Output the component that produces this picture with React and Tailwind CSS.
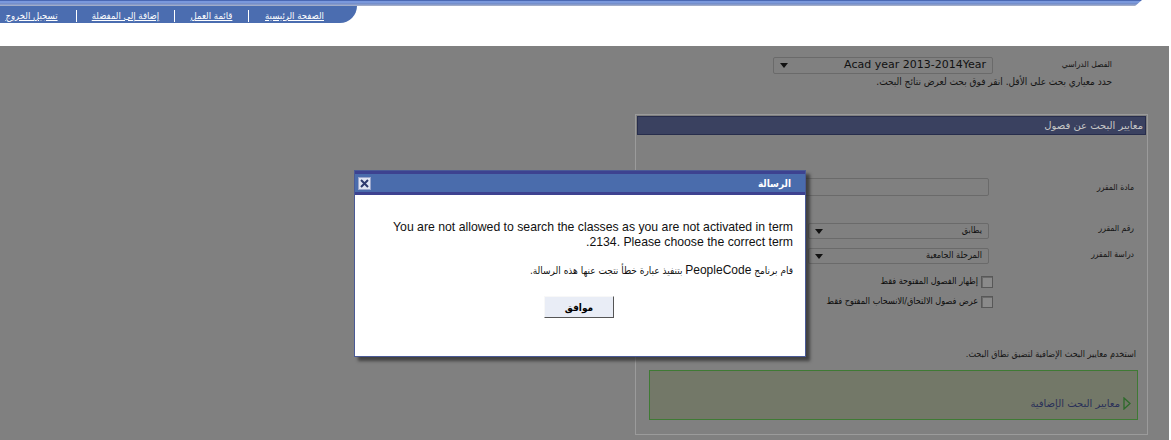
import React from 'react'

const AR = { fontFamily: '"DejaVu Sans Condensed", "DejaVu Sans", "Liberation Sans", sans-serif' }
const EN = { fontFamily: '"Liberation Sans", "DejaVu Sans", sans-serif' }
const VER = { fontFamily: '"DejaVu Sans", "Liberation Sans", sans-serif' }

function NavLink({ children, w }) {
  return (
    <span className={`flex justify-center ${w}`}>
      <span className="text-white underline text-[9.5px] leading-none whitespace-nowrap">{children}</span>
    </span>
  )
}

function Sep() {
  return <span className="w-px h-[12px] bg-white mx-[17px]" />
}

function Arrow() {
  return (
    <svg width="8" height="5" viewBox="0 0 8 5" className="shrink-0">
      <path d="M0 0 L8 0 L4 5 Z" fill="#111" />
    </svg>
  )
}

function GraySelect({ value, className, textClass = 'text-[9px]', font = AR }) {
  return (
    <div className={`flex items-center justify-between border border-[#6a6a6a] rounded-[2px] px-[6px] ${className}`}>
      <span className={`text-[#111] ${textClass} whitespace-nowrap`} style={font}>{value}</span>
      <Arrow />
    </div>
  )
}

function Checkbox({ label }) {
  return (
    <div className="flex items-center gap-[3px] h-[20px]">
      <span className="w-[12px] h-[12px] border border-[#585858] bg-[#8a8a8a] shadow-[inset_1px_1px_0_#6a6a6a]" />
      <span className="text-[9px] text-[#0c0c0c] whitespace-nowrap">{label}</span>
    </div>
  )
}

function FieldRow({ label, children, className = '' }) {
  return (
    <div className={`flex items-start ${className}`}>
      <div className="w-[157px] pr-[12px] text-[8.5px] text-[#151515] whitespace-nowrap">{label}</div>
      {children}
    </div>
  )
}

function Modal() {
  return (
    <div className="absolute left-[354px] top-[170px] w-[452px] bg-white border border-[#4a5a96] shadow-[4px_4px_3px_rgba(40,40,40,0.7)]">
      <div dir="rtl" className="h-[24px] bg-[#4a6cac] border-t-[3px] border-b-[3px] border-[#3d4290] flex items-center justify-between pr-[14px] pl-[3px]">
        <span className="text-white text-[10px] font-bold" style={AR}>الرسالة</span>
        <span className="w-[13px] h-[13px] bg-[#dfe4f2] border border-[#9aa6cc] flex items-center justify-center">
          <svg width="9" height="9" viewBox="0 0 9 9">
            <path d="M1 1 L8 8 M8 1 L1 8" stroke="#2e3a6e" strokeWidth="2" />
          </svg>
        </span>
      </div>
      <div dir="rtl" className="h-[161px] pt-[25px] pr-[12px] pl-[12px]">
        <p className="text-[12.25px] leading-[15px] text-[#111]" style={EN}>
          You are not allowed to search the classes as you are not activated in term 2134. Please choose the correct term.
        </p>
        <p className="mt-[11px] text-[10px] text-[#111] whitespace-nowrap" style={AR}>
          قام برنامج <span className="text-[12px]" style={EN}>PeopleCode</span> بتنفيذ عبارة خطأ نتجت عنها هذه الرسالة.
        </p>
        <div className="flex mt-[17px] mr-[179px]">
          <button className="w-[70px] h-[22px] bg-[#e9edf6] border border-t-[#f8f8f8] border-l-[#f8f8f8] border-b-[#555] border-r-[#555] text-[10px] font-bold text-black" style={AR}>
            موافق
          </button>
        </div>
      </div>
    </div>
  )
}

export default function App() {
  return (
    <div className="relative w-[1171px] h-[440px] overflow-hidden bg-white" style={AR}>
      {/* header */}
      <div className="h-[46px] bg-white">
        <div className="h-[6px] w-[1142px] bg-[linear-gradient(to_bottom,#4a68b4_0px,#4a68b4_1px,#7a98dc_1px,#7a98dc_3px,#6d88c8_3px,#8ea0cc_5px,#b4b8c4_6px)] [clip-path:polygon(0_0,100%_0,99.4%_100%,0_100%)]" />
        <div dir="rtl" className="h-[17px] w-[357px] bg-[#4b6db0] rounded-br-[18px] flex items-center pr-[34px] pt-[2px]">
          <NavLink w="w-[57px]">الصفحة الرئيسية</NavLink>
          <Sep />
          <NavLink w="w-[39px]">قائمة العمل</NavLink>
          <Sep />
          <NavLink w="w-[63px]">إضافة إلى المفضلة</NavLink>
          <Sep />
          <NavLink w="w-[55px]">تسجيل الخروج</NavLink>
        </div>
      </div>

      {/* dimmed page */}
      <div dir="rtl" className="w-[1169px] h-[394px] bg-[#808080]">
        <div className="pr-[57px] pt-[11px]">
          <div className="flex items-start">
            <div className="w-[119px] pt-[1px] text-[8.5px] text-[#151515]">الفصل الدراسي</div>
            <GraySelect value="Acad year 2013-2014Year" className="w-[220px] h-[17px]" textClass="text-[11px]" font={VER} />
          </div>
          <div className="h-[14px] leading-[14px] text-[10px] text-[#151515] mt-[1px]">
            حدد معياري بحث على الأقل. انقر فوق بحث لعرض نتائج البحث.
          </div>
        </div>

        <div className="mr-[21px] mt-[25px] w-[513px] h-[321px] border border-[#9b9b9b] p-px">
          <div className="h-[19px] bg-[#3a4160] border border-[#272d4c] flex items-center pr-[2px]">
            <span className="text-[10px] text-[#c6c6c6] tracking-[0.5px]" style={VER}>معايير البحث عن فصول</span>
          </div>

          <FieldRow label="مادة المقرر" className="mt-[46px]">
            <div className="w-[200px] h-[18px] border border-[#6a6a6a] rounded-[2px] mt-[-3px]" />
          </FieldRow>

          <FieldRow label="رقم المقرر" className="mt-[26px]">
            <GraySelect value="يطابق" className="w-[181px] h-[16px] mt-[1px]" />
          </FieldRow>

          <FieldRow label="دراسة المقرر" className="mt-[9px]">
            <GraySelect value="المرحلة الجامعية" className="w-[181px] h-[16px]" />
          </FieldRow>

          <div className="mr-[153px] mt-[8px]">
            <Checkbox label="إظهار الفصول المفتوحة فقط" />
            <Checkbox label="عرض فصول الالتحاق/الانسحاب المفتوح فقط" />
          </div>

          <div className="mr-[10px] mt-[36px] text-[9px] text-[#151515]">
            استخدم معايير البحث الإضافية لتضيق نطاق البحث.
          </div>

          <div className="mr-[8px] mt-[8px] w-[489px] h-[50px] bg-[#737868] border border-[#3f7a34] flex items-end pb-[8px] pr-[6px]">
            <div className="flex items-center gap-[3px]">
              <svg width="8" height="13" viewBox="0 0 8 13">
                <path d="M1 1 L7 6.5 L1 12 Z" fill="none" stroke="#2d6a2a" strokeWidth="1.3" />
              </svg>
              <span className="text-[10px] text-[#2a3058] tracking-[0.5px]" style={VER}>معايير البحث الإضافية</span>
            </div>
          </div>
        </div>
      </div>

      <Modal />
    </div>
  )
}
